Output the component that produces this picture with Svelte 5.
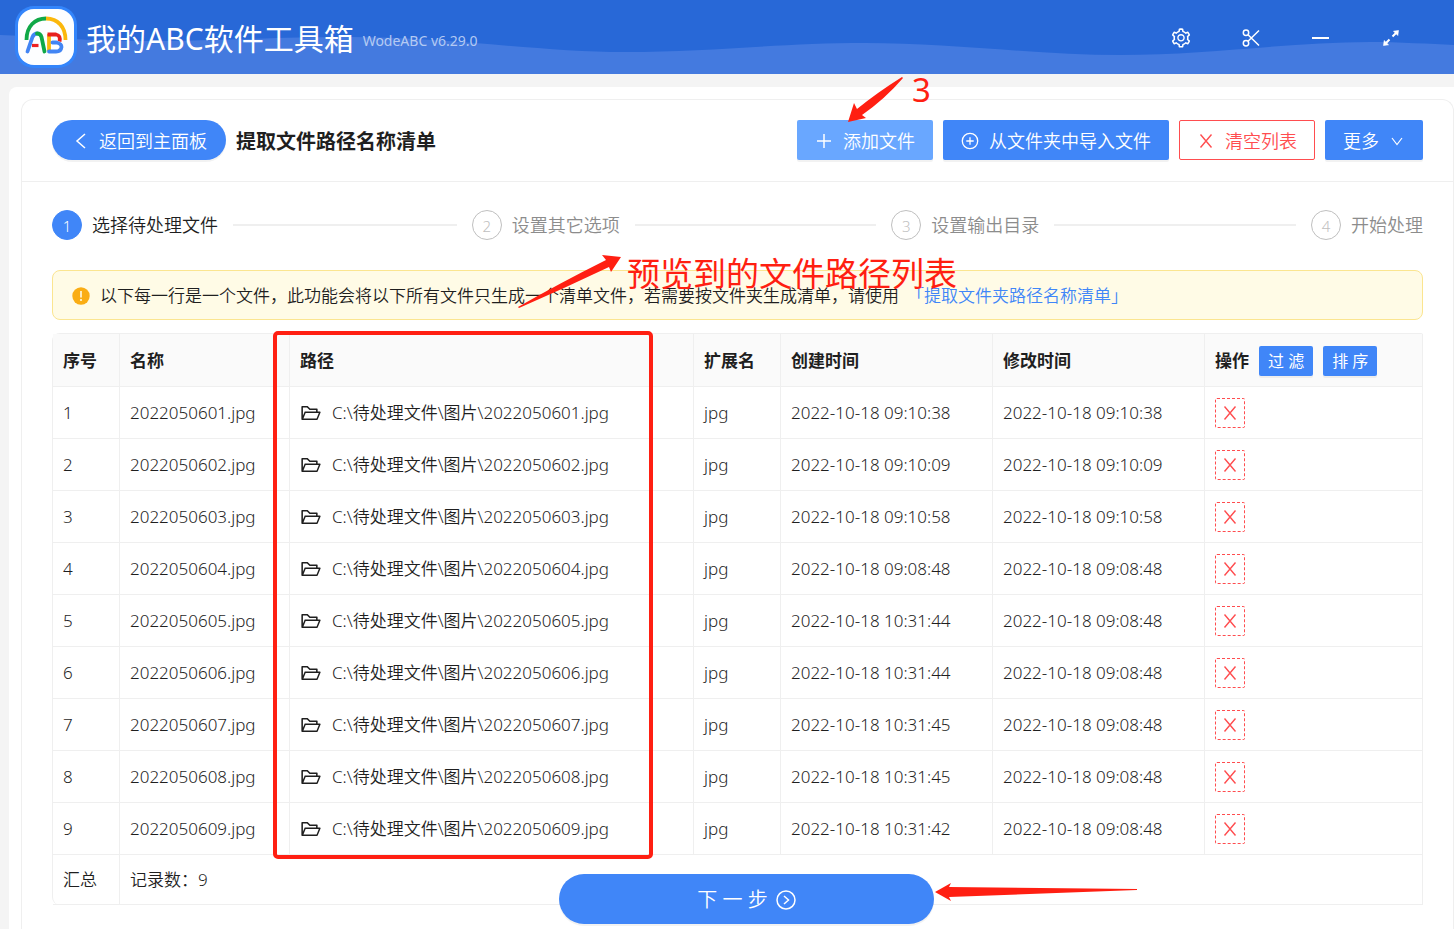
<script>
  const steps = ['选择待处理文件', '设置其它选项', '设置输出目录', '开始处理'];
  const current = 0;

  let rows = $state([
    ['2022050601.jpg', '2022-10-18 09:10:38', '2022-10-18 09:10:38'],
    ['2022050602.jpg', '2022-10-18 09:10:09', '2022-10-18 09:10:09'],
    ['2022050603.jpg', '2022-10-18 09:10:58', '2022-10-18 09:10:58'],
    ['2022050604.jpg', '2022-10-18 09:08:48', '2022-10-18 09:08:48'],
    ['2022050605.jpg', '2022-10-18 10:31:44', '2022-10-18 09:08:48'],
    ['2022050606.jpg', '2022-10-18 10:31:44', '2022-10-18 09:08:48'],
    ['2022050607.jpg', '2022-10-18 10:31:45', '2022-10-18 09:08:48'],
    ['2022050608.jpg', '2022-10-18 10:31:45', '2022-10-18 09:08:48'],
    ['2022050609.jpg', '2022-10-18 10:31:42', '2022-10-18 09:08:48']
  ].map(([name, created, modified]) => ({ name, created, modified })));

  const folder = 'C:\\待处理文件\\图片\\';

  function remove(index) {
    rows.splice(index, 1);
  }
</script>

<div class="app">
  <header class="titlebar">
    <svg class="wave" viewBox="0 0 1454 74" preserveAspectRatio="none" aria-hidden="true">
      <path d="M0 35C50 37 90 41 140 41C220 41 270 37 350 37C450 37 540 52 625 52C710 52 780 43 865 43C950 43 1040 55 1120 55C1210 55 1290 42 1370 42C1400 42 1430 44 1454 45V74H0Z" />
    </svg>
    <svg class="logo" viewBox="0 0 62 62" aria-hidden="true">
      <rect width="62" height="62" rx="19" fill="#3385fb" />
      <rect x="3" y="3" width="56" height="56" rx="16" fill="#fdfeff" />
      <g fill="none" stroke-width="3.8">
        <path d="M11.5 34C11.5 20 20 12.500 31 12.500" stroke="#0fa847" />
        <path d="M31 12.500C43 12.500 50.500 21 50.500 34" stroke="#fbb80c" />
        <path d="M12.500 45.500L17.500 31Q19 27.500 22.500 27.500" stroke="#4285f4" stroke-linecap="round" />
        <path d="M22 27.500Q25.500 27.500 26.500 31L29.500 45.500" stroke="#0fa847" stroke-linecap="round" />
        <path d="M17 39.500H23.500" stroke="#e22" stroke-width="3.200" />
        <path d="M34 28V45" stroke="#fbb80c" />
        <path d="M32.500 28.500H41Q46 29.500 44.500 35.500" stroke="#e8211d" />
        <path d="M37.500 36.500H41.500Q46.500 37.500 46.500 41Q46 45.500 41 45.500H34" stroke="#4285f4" stroke-linecap="round" />
      </g>
    </svg>
    <h1>我的ABC软件工具箱</h1>
    <span class="version">WodeABC v6.29.0</span>
    <nav class="window-tools">
      <button aria-label="设置">
        <svg width="22" height="22" viewBox="0 0 1024 1024" fill="currentColor"><path d="M924.8 625.7l-65.5-56c3.1-19 4.7-38.4 4.7-57.8s-1.6-38.8-4.7-57.8l65.5-56a32.03 32.03 0 009.3-35.2l-.9-2.6a443.74 443.74 0 00-79.7-137.9l-1.8-2.1a32.12 32.12 0 00-35.1-9.5l-81.3 28.9c-30-24.6-63.5-44-99.7-57.6l-15.7-85a32.05 32.05 0 00-25.8-25.7l-2.7-.5c-52.1-9.4-106.9-9.4-159 0l-2.7.5a32.05 32.05 0 00-25.8 25.7l-15.8 85.4a351.86 351.86 0 00-99 57.4l-81.9-29.1a32 32 0 00-35.1 9.5l-1.8 2.1a446.02 446.02 0 00-79.7 137.9l-.9 2.6c-4.500 12.500-.8 26.500 9.300 35.200l66.300 56.600c-3.100 18.800-4.600 38-4.600 57.100 0 19.200 1.500 38.400 4.600 57.100L99 625.500a32.030 32.030 0 00-9.300 35.200l.9 2.600c18.100 50.400 44.900 96.900 79.700 137.900l1.800 2.100a32.120 32.120 0 0035.100 9.500l81.900-29.100c29.800 24.500 63.100 43.900 99 57.400l15.800 85.400a32.050 32.050 0 0025.800 25.700l2.700.5a449.400 449.400 0 00159 0l2.700-.5a32.050 32.050 0 0025.800-25.700l15.700-85a350 350 0 0099.700-57.600l81.300 28.900a32 32 0 0035.100-9.500l1.800-2.100c34.800-41.100 61.600-87.500 79.700-137.900l.9-2.600c4.500-12.300.8-26.300-9.300-35zM788.300 465.900c2.500 15.100 3.800 30.600 3.800 46.100s-1.300 31-3.800 46.100l-6.600 40.100 74.700 63.900a370.030 370.030 0 01-42.600 73.600L721 702.800l-31.400 25.800c-23.900 19.600-50.500 35-79.300 45.800l-38.100 14.300-17.900 97a377.500 377.500 0 01-85 0l-17.900-97.200-37.800-14.500c-28.500-10.800-55-26.200-78.700-45.700l-31.400-25.900-93.400 33.200c-17-22.900-31.200-47.600-42.600-73.600l75.500-64.500-6.500-40c-2.400-14.900-3.700-30.300-3.700-45.500 0-15.300 1.200-30.600 3.700-45.500l6.500-40-75.500-64.500c11.300-26.100 25.600-50.700 42.600-73.600l93.400 33.200 31.400-25.900c23.700-19.500 50.200-34.900 78.700-45.700l37.900-14.300 17.900-97.200c28.100-3.200 56.800-3.200 85 0l17.900 97 38.100 14.300c28.700 10.800 55.400 26.200 79.300 45.800l31.400 25.800 92.800-32.900c17 22.900 31.200 47.600 42.600 73.600L781.800 426l6.500 39.900zM512 326c-97.200 0-176 78.800-176 176s78.800 176 176 176 176-78.800 176-176-78.800-176-176-176zm79.200 255.200A111.600 111.600 0 01512 614c-29.900 0-58-11.700-79.200-32.800A111.600 111.600 0 01400 502c0-29.900 11.700-58 32.800-79.200C454 401.600 482.100 390 512 390c29.900 0 58 11.600 79.200 32.800A111.600 111.600 0 01624 502c0 29.900-11.700 58-32.800 79.200z" /></svg>
      </button>
      <button aria-label="截图">
        <svg width="18" height="18" viewBox="0 0 18 18" fill="none" stroke="currentColor" stroke-width="1.5"><circle cx="4" cy="3.800" r="2.700" /><circle cx="4" cy="14.200" r="2.700" /><path d="M6 5.800L17 16.500M6 12.200L17 1.500" /></svg>
      </button>
      <button aria-label="最小化">
        <svg width="18" height="18" viewBox="0 0 18 18" stroke="currentColor" stroke-width="2"><path d="M0 9H17" /></svg>
      </button>
      <button aria-label="最大化">
        <svg width="18" height="18" viewBox="0 0 18 18" fill="currentColor" stroke="currentColor"><path d="M10.500 7.500L15 3M7.500 10.500L3 15" stroke-width="2" /><path d="M16.500 1.500L11.500 2.200L15.800 6.500ZM1.500 16.500L2.200 11.500L6.500 15.800Z" stroke-width=".6" /></svg>
      </button>
    </nav>
  </header>

  <main class="sheet">
    <section class="card">
      <div class="card-head">
        <button class="btn primary round">
          <svg width="18" height="18" viewBox="0 0 18 18" fill="none" stroke="currentColor" stroke-width="1.5"><path d="M14 2L6 9L14 16" /></svg>
          返回到主面板
        </button>
        <h2>提取文件路径名称清单</h2>
        <div class="actions">
          <button class="btn primary hover">
            <svg width="18" height="18" viewBox="0 0 18 18" stroke="currentColor" stroke-width="1.5"><path d="M9 2V16M2 9H16" /></svg>
            添加文件
          </button>
          <button class="btn primary">
            <svg width="18" height="18" viewBox="0 0 18 18" fill="none" stroke="currentColor" stroke-width="1.3"><circle cx="9" cy="9" r="7.700" /><path d="M9 5.300V12.700M5.300 9H12.700" /></svg>
            从文件夹中导入文件
          </button>
          <button class="btn danger">
            <svg width="18" height="18" viewBox="0 0 18 18" fill="none" stroke="currentColor" stroke-width="1.4"><path d="M3.500 2.500L14.500 15.500M14.500 2.500L3.500 15.500" /></svg>
            清空列表
          </button>
          <button class="btn primary">
            更多
            <svg width="16" height="14" viewBox="0 0 16 14" fill="none" stroke="currentColor" stroke-width="1.2"><path d="M3 4L8 10.500L13 4" /></svg>
          </button>
        </div>
      </div>

      <div class="card-body">
        <ol class="steps">
          {#each steps as label, i}
            <li class:active={i === current}>
              <span class="dot">{i + 1}</span>
              <span>{label}</span>
              {#if i < steps.length - 1}<i class="line"></i>{/if}
            </li>
          {/each}
        </ol>

        <div class="notice">
          <svg width="18" height="18" viewBox="0 0 18 18" aria-hidden="true"><circle cx="9" cy="9" r="8.700" fill="#faad14" /><path d="M9 4V10.500" stroke="#fffbe6" stroke-width="1.600" /><circle cx="9" cy="13" r="1.100" fill="#fffbe6" /></svg>
          <p>以下每一行是一个文件，此功能会将以下所有文件只生成一个清单文件，若需要按文件夹生成清单，请使用<a href="#folders">「提取文件夹路径名称清单」</a></p>
        </div>

        <table>
          <colgroup>
            <col class="c-no" /><col class="c-name" /><col /><col class="c-ext" /><col class="c-time" /><col class="c-time" /><col class="c-ops" />
          </colgroup>
          <thead>
            <tr>
              <th>序号</th>
              <th>名称</th>
              <th>路径</th>
              <th>扩展名</th>
              <th>创建时间</th>
              <th>修改时间</th>
              <th>
                <div class="ops">
                  操作
                  <button class="mini">过 滤</button>
                  <button class="mini">排 序</button>
                </div>
              </th>
            </tr>
          </thead>
          <tbody>
            {#each rows as row, i}
              <tr>
                <td>{i + 1}</td>
                <td>{row.name}</td>
                <td>
                  <div class="path">
                    <svg width="22" height="22" viewBox="0 0 1024 1024" fill="currentColor" aria-hidden="true"><path d="M928 444H820V330.400c0-17.700-14.300-32-32-32H473L355.700 186.200a8.150 8.150 0 00-5.500-2.200H96c-17.700 0-32 14.300-32 32v592c0 17.700 14.300 32 32 32h698c13 0 24.800-7.900 29.700-20l134-332c1.500-3.800 2.300-7.900 2.300-12 0-17.700-14.300-32-32-32zM136 256h188.500l119.600 114.400H748V444H238c-13 0-24.800 7.900-29.700 20L136 643.200V256zm635.300 512H159l103.300-256h612.400L771.300 768z" /></svg>
                    <span>{folder}{row.name}</span>
                  </div>
                </td>
                <td>jpg</td>
                <td>{row.created}</td>
                <td>{row.modified}</td>
                <td>
                  <button class="del" aria-label="删除" onclick={() => remove(i)}>
                    <svg width="18" height="18" viewBox="0 0 18 18" fill="none" stroke="currentColor" stroke-width="1.4"><path d="M3.500 2.500L14.500 15.500M14.500 2.500L3.500 15.500" /></svg>
                  </button>
                </td>
              </tr>
            {/each}
          </tbody>
          <tfoot>
            <tr>
              <td>汇总</td>
              <td colspan="6">记录数：{rows.length}</td>
            </tr>
          </tfoot>
        </table>
      </div>
    </section>
  </main>

  <div class="footer-bar">
    <button class="next">
      下 一 步
      <svg width="20" height="20" viewBox="0 0 20 20" fill="none" stroke="currentColor" stroke-width="1.500"><circle cx="10" cy="10" r="9" /><path d="M8 6L12.500 10L8 14" /></svg>
    </button>
  </div>

  <svg class="marks" viewBox="0 0 1454 929" width="1454" height="929" aria-hidden="true">
    <rect x="275" y="333" width="376" height="524" rx="3" fill="none" stroke="#ff1f12" stroke-width="4" />
    <path d="M848 122L854 103L857 109Q878 92 902 77L903 78Q885 99 862 115L866 118Z" />
    <path d="M621 257L602 255L606 260Q560 283 518 307L519 308Q565 288 609 267L611 272Z" />
    <path d="M935 892L951 883L949 887L1137 889V890L949 897L951 901Z" />
  </svg>
  <span class="mark-text number">3</span>
  <span class="mark-text caption">预览到的文件路径列表</span>
</div>

<style>
  :global(body) {
    margin: 0;
    background: #f4f4f4;
  }
  .app {
    position: relative;
    height: 100vh;
    overflow: hidden;
    display: flex;
    flex-direction: column;
    font: 350 17px/26px "Noto Sans", "Noto Sans CJK SC", sans-serif;
    color: #1f1f1f;
  }
  button {
    font: inherit;
    margin: 0;
    cursor: pointer;
  }
  svg {
    flex: none;
    display: block;
  }
  .titlebar {
    position: relative;
    flex: none;
    height: 74px;
    box-sizing: border-box;
    padding: 0 28px 0 15px;
    display: flex;
    align-items: center;
    background: #2868d7;
    color: #fff;
  }
  .wave {
    position: absolute;
    inset: 0;
    width: 100%;
    height: 100%;
    fill: #447adf;
  }
  .logo {
    position: relative;
    width: 62px;
    height: 62px;
  }
  h1 {
    position: relative;
    margin: 0 9px;
    padding-top: 4px;
    font-size: 30px;
    line-height: 40px;
    font-weight: 400;
  }
  .version {
    position: relative;
    padding-top: 8px;
    font-size: 14px;
    font-weight: 400;
    color: #b4caf3;
  }
  .window-tools {
    position: relative;
    margin-left: auto;
    padding-top: 2px;
    display: flex;
  }
  .window-tools button {
    width: 70px;
    height: 40px;
    padding: 0;
    border: 0;
    background: none;
    color: #fff;
    display: flex;
    align-items: center;
    justify-content: center;
  }
  .sheet {
    flex: 1;
    margin: 13px 0 0 9px;
    padding: 12px 0 0 12px;
    background: #fff;
    border-radius: 8px 0 0 0;
  }
  .card {
    height: 100%;
    border: 1px solid #efefef;
    border-bottom: 0;
    border-radius: 12px 12px 0 0;
    box-sizing: border-box;
  }
  .card-head {
    display: flex;
    align-items: center;
    padding: 20px 30px 21px;
    border-bottom: 1px solid #efefef;
  }
  h2 {
    margin: 0 10px;
    padding-top: 4px;
    font-size: 20px;
    line-height: 30px;
    font-weight: 700;
  }
  .actions {
    margin-left: auto;
    display: flex;
    gap: 10px;
  }
  .btn {
    height: 40px;
    padding: 2px 17px 0;
    box-sizing: border-box;
    display: flex;
    align-items: center;
    gap: 10px;
    border: 1px solid transparent;
    border-radius: 2px;
    font-size: 18px;
    white-space: nowrap;
  }
  .primary {
    background: #4086f8;
    color: #fff;
    box-shadow: 0 2px 0 rgba(0, 0, 0, 0.05);
  }
  .hover {
    background: #69a7ff;
  }
  .danger {
    background: #fff;
    border-color: #ff4d4f;
    color: #ff4d4f;
  }
  .round {
    border-radius: 20px;
    padding: 2px 18px 0;
  }
  .card-body {
    padding: 28px 30px 0;
  }
  .steps {
    margin: 0;
    padding: 0;
    list-style: none;
    display: flex;
    font-size: 18px;
    line-height: 30px;
    color: #8c8c8c;
  }
  .steps li {
    flex: 1;
    display: flex;
    align-items: center;
    gap: 10px;
    white-space: nowrap;
  }
  .steps li:last-child {
    flex: none;
  }
  .dot {
    width: 30px;
    height: 30px;
    line-height: 30px;
    box-sizing: border-box;
    border: 1px solid #bfbfbf;
    border-radius: 50%;
    font-size: 15px;
    text-align: center;
    color: #bfbfbf;
  }
  .line {
    flex: 1;
    height: 2px;
    margin: 0 15px 0 5px;
    background: #efefef;
  }
  .steps .active {
    color: #1f1f1f;
  }
  .active .dot {
    border-color: #4086f8;
    background: #4086f8;
    color: #fff;
  }
  .notice {
    margin: 30px 0 13px;
    padding: 12px 19px 10px;
    display: flex;
    align-items: center;
    gap: 10px;
    border: 1px solid #fbe590;
    border-radius: 8px;
    background: #fffbe6;
  }
  .notice p {
    margin: 0;
  }
  a {
    margin-left: 8px;
    color: #4086f8;
    text-decoration: none;
  }
  table {
    width: 100%;
    table-layout: fixed;
    border-collapse: separate;
    border-spacing: 0;
    border: 1px solid #efefef;
    border-width: 1px 0 0 1px;
    border-radius: 8px 2px 2px 8px;
  }
  .c-no { width: 67px; }
  .c-name { width: 170px; }
  .c-ext { width: 87px; }
  .c-time { width: 212px; }
  .c-ops { width: 218px; }
  th,
  td {
    box-sizing: border-box;
    height: 52px;
    padding: 1px 10px 0;
    border: 0 solid #efefef;
    border-width: 0 1px 1px 0;
    text-align: left;
    white-space: nowrap;
  }
  th {
    height: 53px;
    background: #fafafa;
    font-weight: 700;
  }
  tfoot td {
    height: 50px;
  }
  .ops,
  .path {
    display: flex;
    align-items: center;
    gap: 10px;
  }
  .mini {
    height: 30px;
    padding: 0 9px;
    border: 0;
    border-radius: 2px;
    background: #4086f8;
    box-shadow: 0 2px 0 rgba(0, 0, 0, 0.05);
    color: #fff;
    font-size: 16px;
    font-weight: 400;
  }
  .del {
    width: 30px;
    height: 30px;
    padding: 0;
    display: flex;
    align-items: center;
    justify-content: center;
    border: 1px dashed #ff4d4f;
    border-radius: 2px;
    background: #fff;
    color: #ff4d4f;
  }
  .footer-bar {
    position: absolute;
    left: 39px;
    right: 0;
    bottom: 5px;
    display: flex;
    justify-content: center;
  }
  .next {
    width: 375px;
    height: 50px;
    padding: 2px 0 0;
    display: flex;
    align-items: center;
    justify-content: center;
    gap: 8px;
    border: 0;
    border-radius: 25px;
    background: #4086f8;
    box-shadow: 0 2px 0 rgba(0, 0, 0, 0.05);
    color: #fff;
    font-size: 20px;
  }
  .marks {
    position: absolute;
    left: 0;
    top: 0;
    fill: #ff1f12;
    pointer-events: none;
  }
  .mark-text {
    position: absolute;
    color: #ff1f12;
    font-size: 33px;
    font-weight: 400;
    line-height: 40px;
    pointer-events: none;
    white-space: nowrap;
  }
  .number {
    left: 912px;
    top: 70px;
  }
  .caption {
    left: 627px;
    top: 254px;
  }
</style>
